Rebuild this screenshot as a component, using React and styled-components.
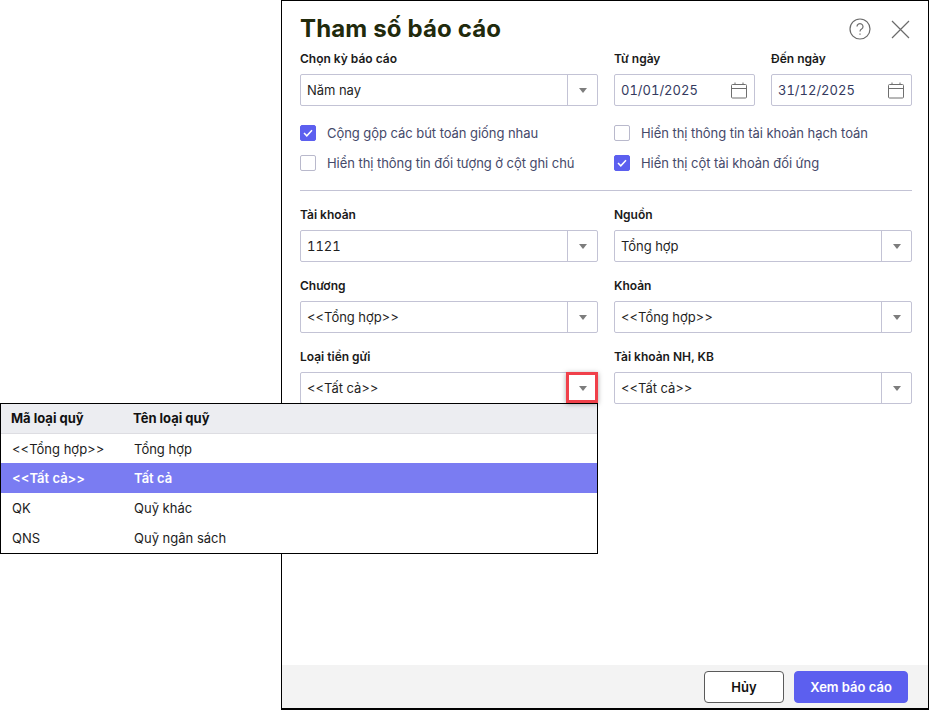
import React from "react";
import styled, { createGlobalStyle } from "styled-components";

const GlobalStyle = createGlobalStyle`
  html, body {
    margin: 0;
    padding: 0;
    background: #fff;
    font-family: Inter, "Liberation Sans", sans-serif;
  }
`;

const Page = styled.div`
  position: relative;
  width: 929px;
  height: 710px;
  overflow: hidden;
  display: flex;
  justify-content: flex-end;
`;

const Dialog = styled.div`
  box-sizing: border-box;
  width: 648px;
  height: 710px;
  border: 1px solid #000;
  border-bottom-width: 2px;
  display: flex;
  flex-direction: column;
`;

const Body = styled.div`
  flex: 1;
  padding: 0 16px 0 18px;
`;

const TitleBar = styled.div`
  height: 42px;
  padding-top: 14px;
  box-sizing: border-box;
  display: flex;
  align-items: center;
  justify-content: space-between;
`;

const Title = styled.h1`
  margin: 0;
  font-size: 24px;
  line-height: 28px;
  font-weight: 700;
  color: #212a0c;
  letter-spacing: 0.14px;
`;

const TitleIcons = styled.div`
  display: flex;
  align-items: center;
  gap: 20px;
  margin-right: 2px;
  color: #6b6b6b;
`;

const Row = styled.div`
  display: grid;
  grid-template-columns: 298px 298px;
  column-gap: 16px;
  margin-top: ${(p) => p.$top || 0}px;
`;

const DateRow = styled.div`
  display: grid;
  grid-template-columns: 141px 141px;
  column-gap: 16px;
`;

const Field = styled.div`
  display: flex;
  flex-direction: column;
`;

const Label = styled.div`
  font-size: 12px;
  font-weight: 600;
  line-height: 16px;
  height: 16px;
  margin-bottom: 7px;
  color: #1a1a1a;
`;

const Box = styled.div`
  box-sizing: border-box;
  height: 32px;
  border: 1px solid #c3c3d5;
  border-radius: 2px;
  display: flex;
  align-items: center;
  background: #fff;
`;

const Value = styled.div`
  flex: 1;
  padding-left: 6px;
  font-size: 13px;
  font-variant-numeric: ${(p) => (p.$num ? "tabular-nums" : "normal")};
  letter-spacing: ${(p) => (p.$num ? "0" : "-0.05px")};
  color: ${(p) => (p.$date ? "#343a5e" : "#1f1f1f")};
`;

const Arrow = styled.div`
  box-sizing: border-box;
  width: 30px;
  height: 100%;
  padding-left: 1px;
  border-left: 1px solid #c3c3d5;
  display: flex;
  align-items: center;
  justify-content: center;
  &::after {
    content: "";
    border-left: 4px solid transparent;
    border-right: 4px solid transparent;
    border-top: 5px solid #7d7d7d;
  }
`;

const CalendarSlot = styled.div`
  display: flex;
  width: 23px;
  color: #6f6f6f;
`;

const Checks = styled.div`
  display: grid;
  grid-template-columns: 298px 298px;
  column-gap: 16px;
  row-gap: 14px;
  margin-top: 19px;
`;

const CheckItem = styled.div`
  display: flex;
  align-items: center;
  gap: 11px;
  height: 16px;
  font-size: 13px;
  letter-spacing: -0.05px;
  color: #45496a;
  white-space: nowrap;
`;

const CheckBox = styled.span`
  box-sizing: border-box;
  width: 16px;
  height: 16px;
  border-radius: 2px;
  border: 1px solid ${(p) => (p.$on ? "#5c5fef" : "#b9b9cc")};
  background: ${(p) => (p.$on ? "#5c5fef" : "#fff")};
  display: flex;
  align-items: center;
  justify-content: center;
  flex: none;
`;

const Divider = styled.hr`
  border: 0;
  height: 1px;
  background: #c3c3d5;
  margin: 19px 0 16px;
`;

const Footer = styled.div`
  height: 43px;
  box-sizing: border-box;
  background: #f3f3f3;
  display: flex;
  align-items: flex-start;
  justify-content: flex-end;
  gap: 10px;
  padding: 6px 20px 0 0;
`;

const Button = styled.button`
  box-sizing: border-box;
  width: ${(p) => (p.$primary ? 114 : 80)}px;
  height: 32px;
  border-radius: 4px;
  border: 1px solid ${(p) => (p.$primary ? "#5c5fef" : "#5a5a5a")};
  background: ${(p) => (p.$primary ? "#5c5fef" : "#fff")};
  color: ${(p) => (p.$primary ? "#fff" : "#111")};
  font-family: inherit;
  font-size: 13px;
  font-weight: 600;
  padding: 0;
`;

const Popup = styled.div`
  position: absolute;
  left: 0;
  top: 403px;
  box-sizing: border-box;
  width: 598px;
  height: 151px;
  border: 1px solid #000;
  background: #fff;
`;

const PopupHead = styled.div`
  display: grid;
  grid-template-columns: 122px 1fr;
  height: 30px;
  box-sizing: border-box;
  align-items: center;
  padding: 0 0 2px 10px;
  font-size: 13px;
  font-weight: 700;
  color: #111;
  background: #ecedf1;
  border-bottom: 1px solid #dddde2;
`;

const PopupRow = styled.div`
  display: grid;
  grid-template-columns: 122px 1fr;
  height: ${(p) => (p.$first ? 29 : 30)}px;
  align-items: center;
  padding-left: 11px;
  font-size: 13px;
  background: ${(p) => (p.$selected ? "#7a7cf2" : "#fff")};
  color: ${(p) => (p.$selected ? "#fff" : "#1c1c1c")};
  font-weight: ${(p) => (p.$selected ? 600 : 400)};
`;

const Highlight = styled.div`
  position: absolute;
  left: 566px;
  top: 372px;
  box-sizing: border-box;
  width: 32px;
  height: 31px;
  border: 3px solid #f0404a;
  box-shadow: 0 1px 5px rgba(0, 0, 0, 0.35);
`;

const Calendar = () => (
  <svg width="17" height="17" viewBox="0 0 17 17" fill="none" stroke="currentColor" strokeWidth="1">
    <rect x="0.5" y="2.5" width="15" height="13.5" rx="1" />
    <path d="M0.5 6.5h15M4 0.5v2M12 0.5v2" />
  </svg>
);

const Tick = () => (
  <svg width="10" height="8" viewBox="0 0 10 8" fill="none" stroke="#fff" strokeWidth="1.5">
    <path d="M1 4l2.8 2.8L9 1.2" />
  </svg>
);

const SelectField = ({ label, value, num }) => (
  <Field>
    <Label>{label}</Label>
    <Box>
      <Value $num={num}>{value}</Value>
      <Arrow />
    </Box>
  </Field>
);

const DateField = ({ label, value }) => (
  <Field>
    <Label>{label}</Label>
    <Box>
      <Value $date $num>{value}</Value>
      <CalendarSlot>
        <Calendar />
      </CalendarSlot>
    </Box>
  </Field>
);

const Check = ({ on, children }) => (
  <CheckItem>
    <CheckBox $on={on}>{on && <Tick />}</CheckBox>
    {children}
  </CheckItem>
);

const funds = [
  ["<<Tổng hợp>>", "Tổng hợp"],
  ["<<Tất cả>>", "Tất cả", true],
  ["QK", "Quỹ khác"],
  ["QNS", "Quỹ ngân sách"],
];

export default function App() {
  return (
    <Page>
      <GlobalStyle />
      <Dialog>
        <Body>
          <TitleBar>
            <Title>Tham số báo cáo</Title>
            <TitleIcons>
              <svg width="22" height="22" viewBox="0 0 22 22" fill="none" stroke="currentColor" strokeWidth="1.2">
                <circle cx="11" cy="11" r="10" />
                <path d="M8 8.6a3 3 0 1 1 4.6 2.5c-1 .6-1.6 1.2-1.6 2.4" />
                <path d="M11 15.4v1.4" />
              </svg>
              <svg width="19" height="19" viewBox="0 0 19 19" fill="none" stroke="currentColor" strokeWidth="1.2">
                <path d="M1 1l17 17M18 1L1 18" />
              </svg>
            </TitleIcons>
          </TitleBar>

          <Row $top={8}>
            <SelectField label="Chọn kỳ báo cáo" value="Năm nay" />
            <DateRow>
              <DateField label="Từ ngày" value="01/01/2025" />
              <DateField label="Đến ngày" value="31/12/2025" />
            </DateRow>
          </Row>

          <Checks>
            <Check on>Cộng gộp các bút toán giống nhau</Check>
            <Check>Hiển thị thông tin tài khoản hạch toán</Check>
            <Check>Hiển thị thông tin đối tượng ở cột ghi chú</Check>
            <Check on>Hiển thị cột tài khoản đối ứng</Check>
          </Checks>

          <Divider />

          <Row>
            <SelectField label="Tài khoản" value="1121" num />
            <SelectField label="Nguồn" value="Tổng hợp" />
          </Row>
          <Row $top={16}>
            <SelectField label="Chương" value="<<Tổng hợp>>" />
            <SelectField label="Khoản" value="<<Tổng hợp>>" />
          </Row>
          <Row $top={16}>
            <SelectField label="Loại tiền gửi" value="<<Tất cả>>" />
            <SelectField label="Tài khoản NH, KB" value="<<Tất cả>>" />
          </Row>
        </Body>
        <Footer>
          <Button>Hủy</Button>
          <Button $primary>Xem báo cáo</Button>
        </Footer>
      </Dialog>

      <Popup>
        <PopupHead>
          <div>Mã loại quỹ</div>
          <div>Tên loại quỹ</div>
        </PopupHead>
        {funds.map(([code, name, selected], i) => (
          <PopupRow key={code} $selected={selected} $first={i === 0}>
            <div>{code}</div>
            <div>{name}</div>
          </PopupRow>
        ))}
      </Popup>
      <Highlight />
    </Page>
  );
}
